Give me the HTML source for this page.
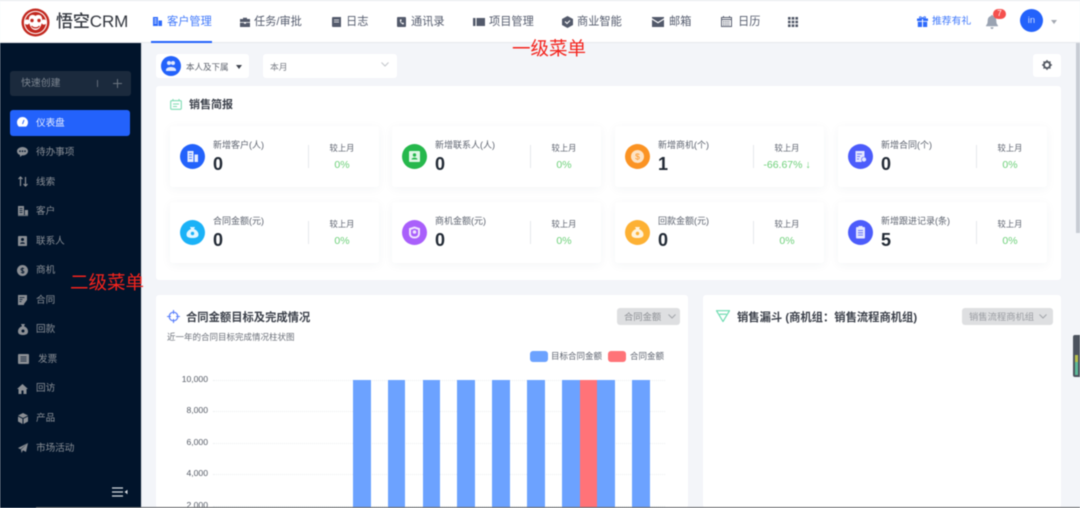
<!DOCTYPE html>
<html lang="zh-CN"><head><meta charset="utf-8"><title>悟空CRM</title>
<style>
html,body{margin:0;padding:0;width:1080px;height:508px;overflow:hidden;background:#f3f5f9}
body{font-family:"Liberation Sans","Noto Sans CJK SC",sans-serif;position:relative}
#r{position:absolute;left:0;top:0;width:1080px;height:508px;overflow:hidden;filter:blur(.4px)}
.a,svg{position:absolute}
.t{position:absolute;white-space:nowrap;line-height:14px;height:14px}
.nav{font-size:11.2px;color:#555c6e;top:15px}
.navi{fill:#535a6b}
.side{font-size:9.6px;color:#8b9097;left:36px}
.sidei{fill:#8b8f95}
.w{position:absolute;background:#fff;border-radius:3px}
.card{position:absolute;width:209px;height:61px;background:#fff;border-radius:3px;box-shadow:0 2px 10px rgba(40,50,80,.05)}
.card .c{position:absolute;left:10px;top:18px;width:25px;height:25px;border-radius:50%}
.card .c svg{left:0;top:0}
.card .l{position:absolute;left:43px;top:12px;font-size:9px;color:#5e6470;line-height:14px;white-space:nowrap}
.card .n{position:absolute;left:43px;top:27px;font-size:18px;font-weight:bold;color:#222a35;line-height:22px}
.card .d{position:absolute;left:138px;top:19px;width:1px;height:23px;background:#e6e8ec}
.card .m{position:absolute;left:137px;width:70px;text-align:center;top:15px;font-size:8.3px;color:#5e6470;line-height:14px}
.card .p{position:absolute;left:137px;width:70px;text-align:center;top:32px;font-size:10.5px;color:#6ed07a;line-height:14px;white-space:nowrap}
.sel{position:absolute;background:#dedfe1;border-radius:3px;height:17px;top:308px;color:#8c8f94;font-size:9.3px;line-height:19px}
.y{position:absolute;left:170px;width:38px;text-align:right;font-size:8.6px;color:#555b66;line-height:12px}
.g{position:absolute;left:213px;width:452px;border-top:1px dotted #eceef1;height:0}
.b{position:absolute;top:380px;height:128px;width:18px;background:#6ca2ff}
.red{position:absolute;color:#f4231c;font-size:18.5px;line-height:22px;white-space:nowrap}
</style></head><body><div id="r">

<!-- top bar -->
<div class="a" style="left:0;top:0;width:1080px;height:43px;background:#fff;border-top:1px solid #e9ebef;box-sizing:border-box;border-bottom:1px solid #e6e8ec"></div>
<svg style="left:21px;top:8px" width="29" height="29" viewBox="0 0 29 29"><circle cx="14.5" cy="14.5" r="14" fill="#c2281f"/><circle cx="14.5" cy="14.5" r="11.6" fill="#fff"/><circle cx="14.5" cy="14.5" r="10.6" fill="#c2281f"/><circle cx="6" cy="14" r="2.6" fill="#fff"/><circle cx="23" cy="14" r="2.6" fill="#fff"/><path d="M14.5 8c2-2 6-1.500 6.500 2 .5 2 .5 4-.5 6-1 3.500-3 6-6 6s-5-2.500-6-6c-1-2-1-4-.5-6 .5-3.500 4.500-4 6.500-2z" fill="#fff"/><circle cx="11" cy="12.500" r="1.700" fill="#c2281f"/><circle cx="18" cy="12.500" r="1.700" fill="#c2281f"/><path d="M10.500 18c2 2.500 6 2.500 8 0" stroke="#c2281f" stroke-width="1.200" fill="none"/></svg>
<div class="t" style="left:56px;top:11px;height:22px;line-height:22px;font-size:17px;color:#33373f;font-weight:500;letter-spacing:-.1px">悟空CRM</div>

<svg style="left:152px;top:16px" width="11" height="11" viewBox="0 0 11 11"><path d="M1 1h5v9H1zM6.500 4.500H10V10H6.500z" fill="#2f6bfb"/><path d="M2.300 3h2.400M2.300 5h2.400M2.300 7h2.400" stroke="#fff" stroke-width=".8"/></svg>
<div class="t nav" style="left:167px;color:#3f78fb">客户管理</div>
<div class="a" style="left:151px;top:41px;width:61px;height:2px;background:#2362fb"></div>

<svg style="left:240px;top:17px" width="10" height="10" viewBox="0 0 10 10"><path class="navi" d="M3 2V.8h4V2h3v3H0V2zM0 5.800h4v1h2v-1h4V10H0z"/></svg>
<div class="t nav" style="left:254px">任务/审批</div>
<svg style="left:332px;top:17px" width="9" height="10" viewBox="0 0 9 10"><path class="navi" d="M1 0h8v10H1a1 1 0 0 1-1-1V1a1 1 0 0 1 1-1z"/><path d="M2 3h5M2 5h5" stroke="#fff" stroke-width=".8"/></svg>
<div class="t nav" style="left:346px">日志</div>
<svg style="left:397px;top:17px" width="9" height="10" viewBox="0 0 9 10"><rect class="navi" width="9" height="10" rx="1"/><path d="M3 2.500c-.5 2 1 4.500 3.500 5l.5-1.300-1.300-.7-.6.500c-.7-.4-1-1-1.200-1.800l.7-.4-.2-1.500z" fill="#fff"/></svg>
<div class="t nav" style="left:411px">通讯录</div>
<svg style="left:473px;top:17px" width="12" height="10" viewBox="0 0 12 10"><path class="navi" d="M0 1h2.500v8H0zM3.500 1H12v8H3.500z"/></svg>
<div class="t nav" style="left:489px">项目管理</div>
<svg style="left:562px;top:16px" width="11" height="12" viewBox="0 0 11 12"><path class="navi" d="M5.500 0L11 3v6l-5.500 3L0 9V3z"/><path d="M3 5.500l2 2 3-3" stroke="#fff" stroke-width="1.100" fill="none"/></svg>
<div class="t nav" style="left:577px">商业智能</div>
<svg style="left:652px;top:17px" width="12" height="10" viewBox="0 0 12 10"><path class="navi" d="M0 0h12v1.200L6 5 0 1.200zM0 2.600L6 6.400l6-3.800V10H0z"/></svg>
<div class="t nav" style="left:669px">邮箱</div>
<svg style="left:721px;top:16px" width="11" height="11" viewBox="0 0 11 11"><path d="M2.500 0v2M8.500 0v2" stroke="#5a6070"/><rect x=".5" y="1.500" width="10" height="9" fill="none" stroke="#5a6070"/><path d="M.5 3.500h10" stroke="#5a6070"/><path d="M2 5.500h7M2 7.200h7M2 9h7" stroke="#5a6070" stroke-dasharray="1 .8"/></svg>
<div class="t nav" style="left:738px">日历</div>
<svg style="left:788px;top:17px" width="10" height="10" viewBox="0 0 10 10"><path fill="#505766" d="M0 0h2.600v2.600H0zM3.700 0h2.600v2.600H3.700zM7.400 0H10v2.600H7.400zM0 3.700h2.600v2.600H0zM3.700 3.700h2.600v2.600H3.700zM7.400 3.700H10v2.600H7.400zM0 7.400h2.600V10H0zM3.700 7.400h2.600V10H3.700zM7.400 7.400H10V10H7.400z"/></svg>

<svg style="left:917px;top:16px" width="11" height="11" viewBox="0 0 11 11"><path fill="#2f6bfb" d="M0 2.500h5v2.500H0zM6 2.500h5v2.500H6zM.8 5.800H5V11H.8zM6 5.800h4.200V11H6z"/><path d="M5.500 2.500C4 .3 2.500.3 2.500 1.500s1.500 1 3 1c1.500 0 3 .2 3-1s-1.500-1.200-3 1z" fill="none" stroke="#2f6bfb" stroke-width=".9"/></svg>
<div class="t" style="left:932px;top:15px;font-size:9.8px;color:#3f78fb">推荐有礼</div>
<svg style="left:986px;top:15px" width="12" height="14" viewBox="0 0 12 14"><path fill="#9aa3b2" d="M6 0c.6 0 1 .4 1 1 2.200.5 3.300 2.300 3.300 4.500 0 2.500.5 3.700 1.700 5v.8H0v-.8c1.200-1.300 1.700-2.500 1.700-5C1.700 3.300 2.800 1.500 5 1c0-.6.400-1 1-1zM4.500 12.200h3C7.500 13.300 6.800 14 6 14s-1.500-.7-1.500-1.800z"/></svg>
<div class="a" style="left:993px;top:9px;width:13px;height:10px;background:#f5504e;border-radius:6px;color:#fff;font-size:8px;line-height:10px;text-align:center">7</div>
<div class="a" style="left:1020px;top:9px;width:23px;height:23px;border-radius:50%;background:#2362fb;color:#cfdcff;font-size:9.5px;line-height:23px;text-align:center">in</div>
<div class="a" style="left:1051px;top:20px;width:0;height:0;border:3.500px solid transparent;border-top:4px solid #a4a9b2"></div>

<!-- sidebar -->
<div class="a" style="left:0;top:43px;width:141px;height:465px;background:#01142b"></div>
<div class="a" style="left:141px;top:43px;width:1px;height:465px;background:#e4e7ec"></div>
<div class="a" style="left:10px;top:71px;width:121px;height:25px;background:#1b2a3d;border-radius:3px"></div>
<div class="t" style="left:21px;top:77px;font-size:9.9px;color:#7c8590">快速创建</div>
<div class="a" style="left:97px;top:80px;width:1px;height:7px;background:#5f6a77"></div>
<svg style="left:113px;top:79px" width="9" height="9" viewBox="0 0 9 9"><path d="M4.500 0v9M0 4.500h9" stroke="#6b7580"/></svg>

<div class="a" style="left:10px;top:110px;width:120px;height:26px;background:#2362fb;border-radius:3px"></div>
<svg style="left:17px;top:117px" width="11" height="10" viewBox="0 0 11 10"><path fill="#fff" d="M5.500 0C2.500 0 0 2.400 0 5.400c0 1.700.7 3.200 1.800 4.100.1.100.2.100.3.100h6.800c.1 0 .2 0 .3-.1 1.100-.9 1.800-2.400 1.800-4.100C11 2.400 8.500 0 5.500 0z"/><path d="M5.500 7L7 3" stroke="#2362fb" stroke-width="1"/></svg>
<div class="t side" style="top:117px;color:#e6edff">仪表盘</div>

<svg style="left:17px;top:147px" width="11" height="10" viewBox="0 0 11 10"><path class="sidei" d="M5.500 0C8.500 0 11 1.800 11 4.200S8.500 8.400 5.500 8.400H5L3 10V8C1.200 7.300 0 5.900 0 4.200 0 1.800 2.500 0 5.500 0z"/><circle cx="3" cy="4.200" r=".8" fill="#01142b"/><circle cx="5.500" cy="4.200" r=".8" fill="#01142b"/><circle cx="8" cy="4.200" r=".8" fill="#01142b"/></svg>
<div class="t side" style="top:146px">待办事项</div>

<svg style="left:18px;top:176px" width="10" height="11" viewBox="0 0 10 11"><path d="M2.500 10V1M.5 3l2-2 2 2M7.500 1v9M5.500 8l2 2 2-2" stroke="#8b8f95" stroke-width="1.200" fill="none"/></svg>
<div class="t side" style="top:176px">线索</div>

<svg style="left:18px;top:206px" width="10" height="10" viewBox="0 0 10 10"><path class="sidei" d="M0 0h6v9H0zM6.800 4H10v5H6.800zM0 9.200h10V10H0z"/><path d="M1.500 2.500h3M1.500 4.500h3M1.500 6.500h3" stroke="#01142b" stroke-width=".8"/></svg>
<div class="t side" style="top:205px">客户</div>

<svg style="left:18px;top:236px" width="9" height="10" viewBox="0 0 9 10"><rect class="sidei" width="9" height="10" rx=".8"/><circle cx="4.500" cy="3.500" r="1.500" fill="#01142b"/><path d="M2 7.800c.3-2 4.700-2 5 0z" fill="#01142b"/></svg>
<div class="t side" style="top:235px">联系人</div>

<svg style="left:17px;top:265px" width="11" height="11" viewBox="0 0 11 11"><circle class="sidei" cx="5.500" cy="5.500" r="5.500"/><path d="M7 3.800C6.500 3 4 3 4 4.500S7 5.500 7 7 4.500 8 4 7.200M5.500 2.500v6" stroke="#01142b" stroke-width=".8" fill="none"/></svg>
<div class="t side" style="top:264px">商机</div>

<svg style="left:18px;top:295px" width="10" height="10" viewBox="0 0 10 10"><path class="sidei" d="M0 0h9v5L6 9v1H0z"/><path d="M1.500 2.500h5M1.500 4.500h3M1.500 6.500h2" stroke="#01142b" stroke-width=".8"/></svg>
<div class="t side" style="top:294px">合同</div>

<svg style="left:18px;top:324px" width="10" height="11" viewBox="0 0 10 11"><path class="sidei" d="M3 0h4L6 2.200C8.500 3 10 5 10 7.500 10 10 8 11 5 11S0 10 0 7.500C0 5 1.500 3 4 2.200z"/><circle cx="5" cy="7" r="1.500" fill="#01142b"/></svg>
<div class="t side" style="top:323px">回款</div>

<svg style="left:18px;top:354px" width="11" height="10" viewBox="0 0 11 10"><rect class="sidei" width="11" height="10" rx="1"/><path d="M2.500 3h6M2.500 5h6M2.500 7h6" stroke="#01142b" stroke-width=".8"/></svg>
<div class="t side" style="top:353px;left:38px">发票</div>

<svg style="left:17px;top:384px" width="11" height="10" viewBox="0 0 11 10"><path class="sidei" d="M5.500 0L11 5H9.500v5h-3V6.500h-2V10h-3V5H0z"/></svg>
<div class="t side" style="top:382px">回访</div>

<svg style="left:18px;top:413px" width="10" height="11" viewBox="0 0 10 11"><path class="sidei" d="M5 0l5 2.500L5 5 0 2.500zM0 3.500l4.500 2.300V11L0 8.500zM10 3.500L5.500 5.800V11L10 8.500z"/></svg>
<div class="t side" style="top:412px">产品</div>

<svg style="left:18px;top:443px" width="10" height="10" viewBox="0 0 10 10"><path class="sidei" d="M10 0L8 9 5 7.300 3.500 10 3 6.500zM10 0L0 5l2.500 1.200z"/></svg>
<div class="t side" style="top:442px">市场活动</div>

<svg style="left:112px;top:487px" width="16" height="10" viewBox="0 0 16 10"><path d="M0 1h11M0 5h11M0 9h11" stroke="#d6dae0" stroke-width="1.300"/><path d="M12.500 5L15.500 2.800v4.400z" fill="#d6dae0"/></svg>

<!-- toolbar -->
<div class="w" style="left:156px;top:54px;width:93px;height:24px"></div>
<div class="a" style="left:161px;top:56px;width:20px;height:20px;border-radius:50%;background:#2362fb"></div>
<svg style="left:165px;top:60px" width="12" height="12" viewBox="0 0 12 12"><circle cx="4" cy="3" r="2" fill="#dfe8ff"/><circle cx="8" cy="3" r="2" fill="#dfe8ff"/><path d="M1 10c0-4 10-4 10 0v1H1z" fill="#dfe8ff"/></svg>
<div class="t" style="left:186px;top:59.500px;font-size:8.500px;color:#5a5f6a">本人及下属</div>
<div class="a" style="left:235.500px;top:64.500px;width:0;height:0;border:3.500px solid transparent;border-top:4px solid #3f444e"></div>
<div class="w" style="left:263px;top:54px;width:134px;height:24px"></div>
<div class="t" style="left:270px;top:60px;font-size:8.800px;color:#777b84">本月</div>
<svg style="left:381px;top:62px" width="8" height="5" viewBox="0 0 8 5"><path d="M.5.500L4 4 7.500.5" stroke="#c4c7cc" fill="none"/></svg>
<div class="w" style="left:1033px;top:54px;width:28px;height:23px"></div>
<svg style="left:1042px;top:60px" width="10" height="10" viewBox="0 0 10 10"><circle cx="5" cy="5" r="3.100" fill="none" stroke="#555a63" stroke-width="2"/><path d="M5 0v10M0 5h10M1.500 1.500l7 7M8.500 1.500l-7 7" stroke="#555a63" stroke-width="1.200" stroke-dasharray="1.500 7 1.500 0"/></svg>

<!-- panel 1 -->
<div class="w" style="left:156px;top:86px;width:905px;height:194px"></div>
<svg style="left:170px;top:98px" width="12" height="12" viewBox="0 0 12 12"><rect x=".7" y="2.700" width="10.600" height="8.600" rx="1" fill="none" stroke="#7fdcb4" stroke-width="1.100"/><path d="M3 2.700V1M9 2.700V1M3 6h6M3 8.500h4" stroke="#7fdcb4"/></svg>
<div class="t" style="left:189px;top:98px;font-size:11px;font-weight:bold;color:#3a3f49">销售简报</div>

<div class="card" style="left:170px;top:126px"><div class="c" style="background:#2362fb"><svg width="25" height="25" viewBox="0 0 25 25"><path fill="#e5ecff" d="M7.500 7h6v11h-6zM14.500 10.500h3.500V18h-3.500z"/><path d="M9 9.500h3M9 12h3M9 14.500h3" stroke="#2362fb" stroke-width=".8"/></svg></div><div class="l">新增客户(人)</div><div class="n">0</div><div class="d"></div><div class="m">较上月</div><div class="p">0%</div></div>

<div class="card" style="left:392px;top:126px"><div class="c" style="background:#26b84c"><svg width="25" height="25" viewBox="0 0 25 25"><rect x="7" y="7" width="11" height="11" rx="1" fill="#dff7e5"/><circle cx="12.500" cy="11" r="1.700" fill="#26b84c"/><path d="M9.500 15.500c.3-2.500 5.700-2.500 6 0z" fill="#26b84c"/></svg></div><div class="l">新增联系人(人)</div><div class="n">0</div><div class="d"></div><div class="m">较上月</div><div class="p">0%</div></div>

<div class="card" style="left:615px;top:126px"><div class="c" style="background:#fb9323"><svg width="25" height="25" viewBox="0 0 25 25"><circle cx="12.500" cy="12.500" r="6.500" fill="#fde3c4"/><text x="12.500" y="15.500" font-size="8.500" text-anchor="middle" fill="#fb9323" font-family="Liberation Sans">$</text></svg></div><div class="l">新增商机(个)</div><div class="n">1</div><div class="d"></div><div class="m">较上月</div><div class="p">-66.67% ↓</div></div>

<div class="card" style="left:838px;top:126px"><div class="c" style="background:#4c5cfb"><svg width="25" height="25" viewBox="0 0 25 25"><path fill="#e3e6ff" d="M7.500 7h9v6l-3 5h-6z"/><path d="M9 10h5M9 12.500h3M9 15h2" stroke="#4c5cfb" stroke-width=".8"/><circle cx="16" cy="15.500" r="2.500" fill="#e3e6ff" stroke="#4c5cfb" stroke-width=".6"/></svg></div><div class="l">新增合同(个)</div><div class="n">0</div><div class="d"></div><div class="m">较上月</div><div class="p">0%</div></div>

<div class="card" style="left:170px;top:202px"><div class="c" style="background:#1bb2f7"><svg width="25" height="25" viewBox="0 0 25 25"><path fill="#e3f6ff" d="M10 7h5l-1 2c2.500 1 4.500 3 4.500 5.500 0 2.800-2.500 3.500-6 3.500s-6-.7-6-3.500C6.500 12 8.500 10 11 9z"/><circle cx="12.500" cy="13.500" r="1.700" fill="#1bb2f7"/></svg></div><div class="l">合同金额(元)</div><div class="n">0</div><div class="d"></div><div class="m">较上月</div><div class="p">0%</div></div>

<div class="card" style="left:392px;top:202px"><div class="c" style="background:#a95ffb"><svg width="25" height="25" viewBox="0 0 25 25"><path fill="none" stroke="#f0e2ff" stroke-width="2" d="M8 9l4.500-1.500L17 9v4.500c0 2.500-2 4-4.500 4S8 16 8 13.500z"/><circle cx="12.500" cy="12" r="1.800" fill="#f0e2ff"/></svg></div><div class="l">商机金额(元)</div><div class="n">0</div><div class="d"></div><div class="m">较上月</div><div class="p">0%</div></div>

<div class="card" style="left:615px;top:202px"><div class="c" style="background:#fdb134"><svg width="25" height="25" viewBox="0 0 25 25"><path fill="#fff3dc" d="M10 7h5l-1 2c2.500 1 4.500 3 4.500 5.500 0 2.800-2.500 3.500-6 3.500s-6-.7-6-3.500C6.500 12 8.500 10 11 9z"/><circle cx="12.500" cy="13.500" r="1.700" fill="#fdb134"/></svg></div><div class="l">回款金额(元)</div><div class="n">0</div><div class="d"></div><div class="m">较上月</div><div class="p">0%</div></div>

<div class="card" style="left:838px;top:202px"><div class="c" style="background:#4c5cfb"><svg width="25" height="25" viewBox="0 0 25 25"><rect x="8" y="7" width="9" height="11.500" rx="1" fill="#e3e6ff"/><rect x="10.500" y="6" width="4" height="2" fill="#e3e6ff"/><path d="M10 10.500h5M10 12.800h5M10 15.100h5" stroke="#4c5cfb" stroke-width=".8"/></svg></div><div class="l">新增跟进记录(条)</div><div class="n">5</div><div class="d"></div><div class="m">较上月</div><div class="p">0%</div></div>

<!-- panel 2 -->
<div class="w" style="left:156px;top:295px;width:532px;height:213px"></div>
<svg style="left:167px;top:310px" width="13" height="13" viewBox="0 0 13 13"><circle cx="6.500" cy="6.500" r="4.300" fill="none" stroke="#5a7ffb" stroke-width="1.200"/><path d="M6.500 0v4M6.500 9v4M0 6.500h4M9 6.500h4" stroke="#5a7ffb" stroke-width="1.100"/></svg>
<div class="t" style="left:186px;top:311px;font-size:11.300px;font-weight:bold;color:#3a3f49">合同金额目标及完成情况</div>
<div class="sel" style="left:617px;width:63px"><span style="position:absolute;left:7px">合同金额</span><svg style="left:51px;top:6px" width="8" height="5" viewBox="0 0 8 5"><path d="M.5.500L4 4 7.500.5" stroke="#a2a5aa" fill="none"/></svg></div>
<div class="t" style="left:167px;top:330px;font-size:8.500px;color:#6a6f78">近一年的合同目标完成情况柱状图</div>

<div class="a" style="left:530px;top:351px;width:18px;height:11px;background:#6ca2ff;border-radius:3px"></div>
<div class="t" style="left:551px;top:349px;font-size:8.500px;color:#5e6470">目标合同金额</div>
<div class="a" style="left:608px;top:351px;width:18px;height:11px;background:#ff7378;border-radius:3px"></div>
<div class="t" style="left:630px;top:349px;font-size:8.500px;color:#5e6470">合同金额</div>

<div class="g" style="top:380px"></div><div class="g" style="top:411px"></div><div class="g" style="top:443px"></div><div class="g" style="top:474px"></div><div class="g" style="top:506px"></div>
<div class="y" style="top:373px">10,000</div><div class="y" style="top:404px">8,000</div><div class="y" style="top:436px">6,000</div><div class="y" style="top:467px">4,000</div><div class="y" style="top:499px">2,000</div>

<div class="b" style="left:353px"></div><div class="b" style="left:388px;width:17px"></div><div class="b" style="left:423px;width:17px"></div><div class="b" style="left:457px"></div><div class="b" style="left:492px"></div><div class="b" style="left:527px"></div><div class="b" style="left:562px"></div><div class="b" style="left:597px"></div><div class="b" style="left:632px"></div><div class="b" style="left:580px;width:17px;background:#ff7378"></div>

<!-- panel 3 -->
<div class="w" style="left:703px;top:295px;width:358px;height:213px"></div>
<svg style="left:716px;top:310px" width="14" height="12" viewBox="0 0 14 12"><path d="M.5.700h13L7 11.500z" fill="none" stroke="#6ddbb0" stroke-width="1.200"/><path d="M3.500 4.200h7" stroke="#6ddbb0" stroke-width="1.200"/></svg>
<div class="t" style="left:737px;top:311px;font-size:11.300px;font-weight:bold;color:#3a3f49">销售漏斗 (商机组：销售流程商机组)</div>
<div class="sel" style="left:962px;width:91px;color:#9a9da2"><span style="position:absolute;left:7px">销售流程商机组</span><svg style="left:77px;top:6px" width="8" height="5" viewBox="0 0 8 5"><path d="M.5.500L4 4 7.500.5" stroke="#a2a5aa" fill="none"/></svg></div>

<!-- scrollbar + widget -->
<div class="a" style="left:1076px;top:43px;width:4px;height:190px;background:#c8ccd4"></div>
<div class="a" style="left:1073px;top:335px;width:7px;height:42px;background:#4c535e;border-radius:2px 0 0 2px"></div>
<div class="a" style="left:1075px;top:355px;width:3px;height:7px;background:#b8c04a"></div>
<div class="a" style="left:1075px;top:362px;width:3px;height:13px;background:#5dba98"></div>

<!-- bottom line -->
<div class="a" style="left:36px;top:507px;width:1044px;height:1px;background:#5f6062"></div>

<!-- annotations -->
<div class="red" style="left:512px;top:38px">一级菜单</div>
<div class="red" style="left:70px;top:272px">二级菜单</div>

</div></body></html>
